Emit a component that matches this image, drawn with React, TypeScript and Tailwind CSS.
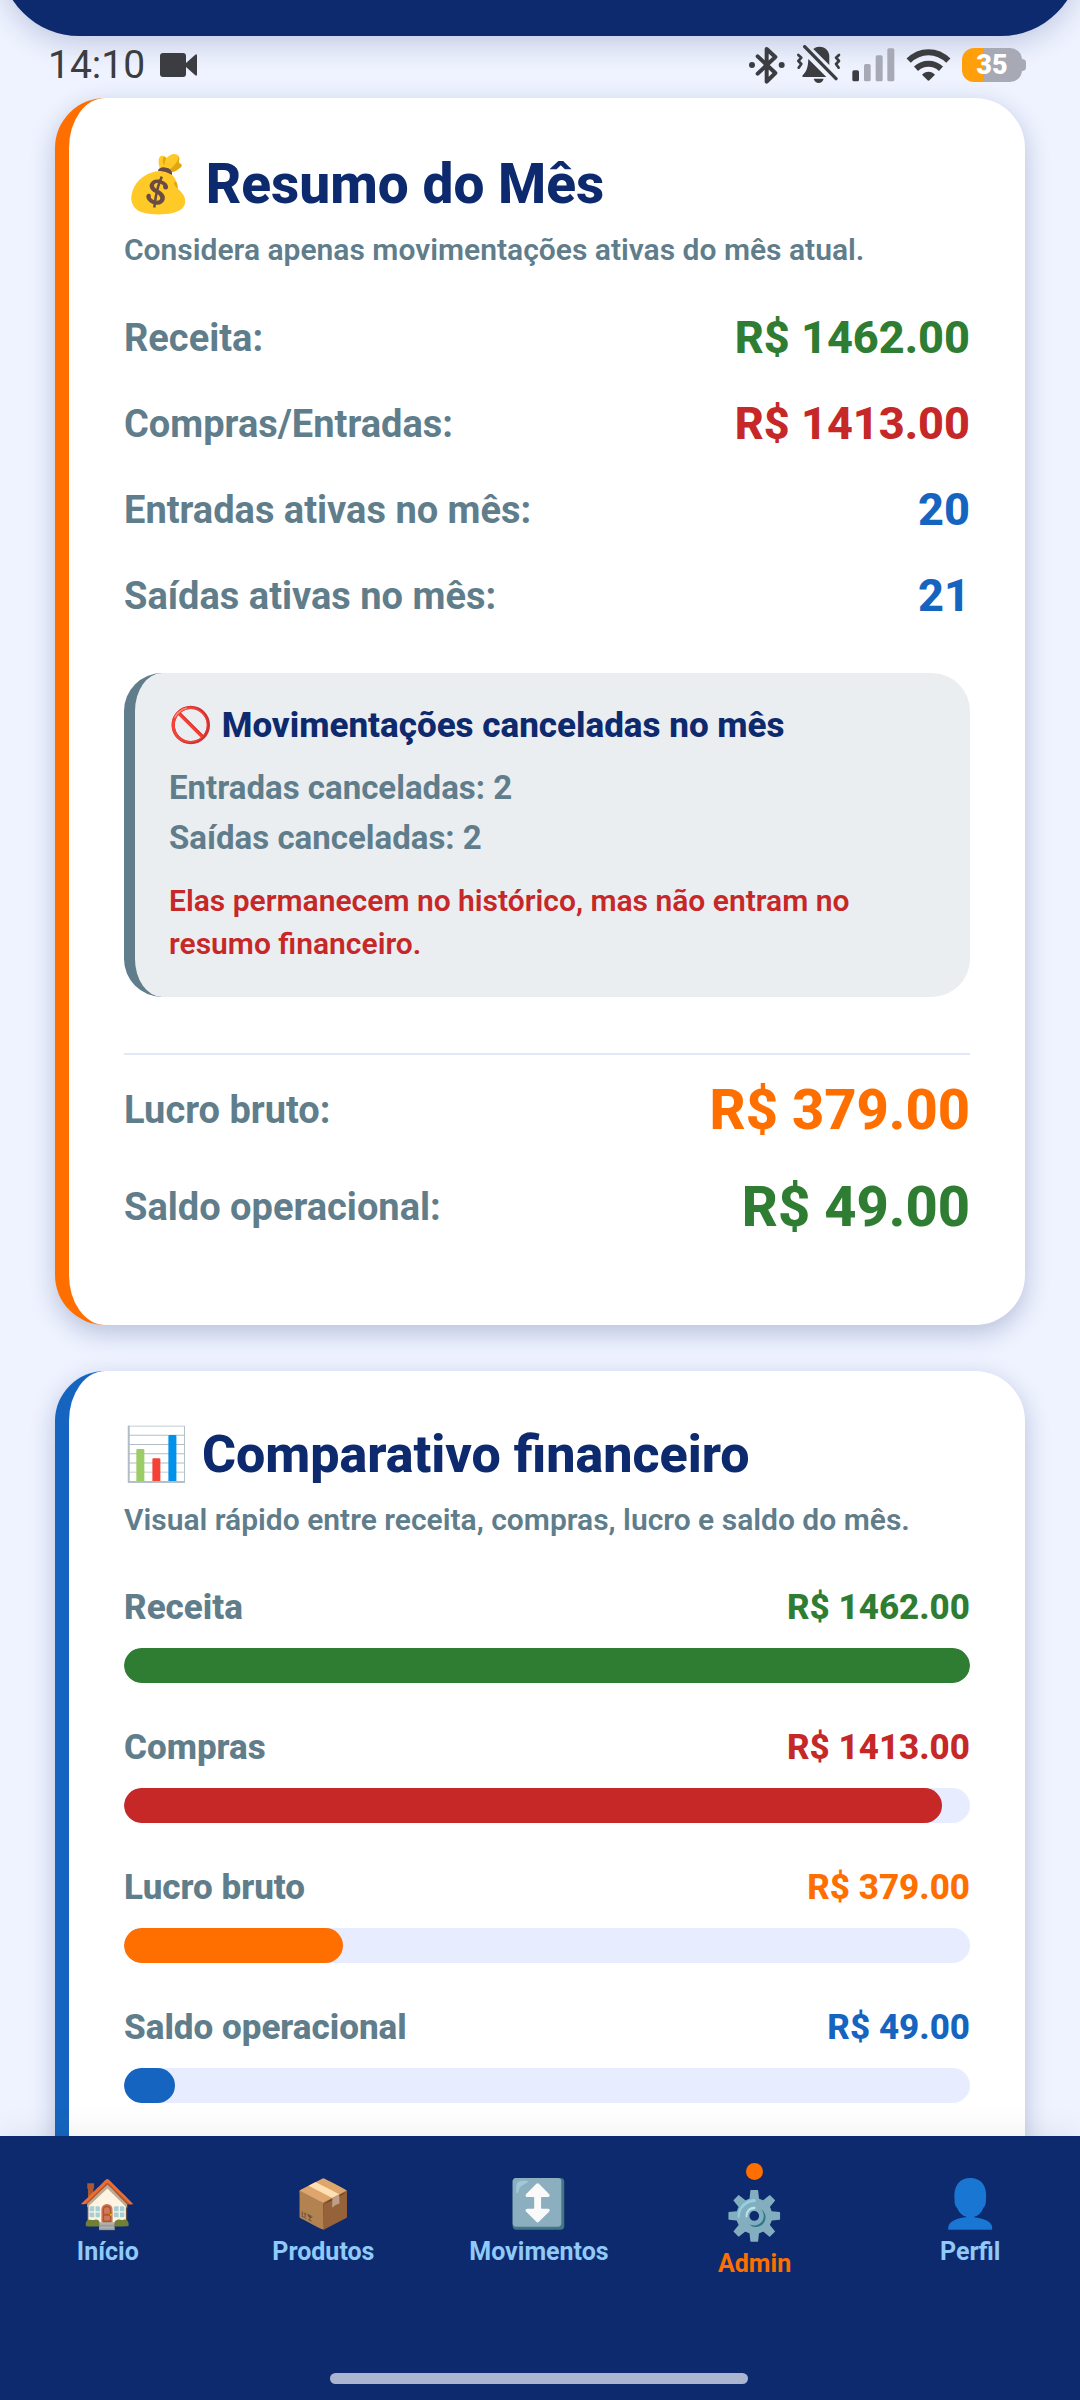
import type { ReactNode } from "react";
import clsx from "clsx";

const summary = [
  { label: "Receita:", value: "R$ 1462.00", color: "text-[#2e7d32]" },
  { label: "Compras/Entradas:", value: "R$ 1413.00", color: "text-[#c62828]" },
  { label: "Entradas ativas no mês:", value: "20", color: "text-[#1565c0]" },
  { label: "Saídas ativas no mês:", value: "21", color: "text-[#1565c0]" },
];

const totals = [
  { label: "Lucro bruto:", value: "R$ 379.00", color: "text-[#ff6f00]" },
  { label: "Saldo operacional:", value: "R$ 49.00", color: "text-[#2e7d32]" },
];

const bars = [
  { label: "Receita", amount: 1462, color: "text-[#2e7d32]", fill: "bg-[#2e7d32]" },
  { label: "Compras", amount: 1413, color: "text-[#c62828]", fill: "bg-[#c62828]" },
  { label: "Lucro bruto", amount: 379, color: "text-[#ff6f00]", fill: "bg-[#ff6f00]" },
  { label: "Saldo operacional", amount: 49, color: "text-[#1565c0]", fill: "bg-[#1565c0]" },
];

const tabs = [
  { icon: "🏠", label: "Início" },
  { icon: "📦", label: "Produtos" },
  { icon: "↕️", label: "Movimentos" },
  { icon: "⚙️", label: "Admin", active: true },
  { icon: "👤", label: "Perfil" },
];

const maxAmount = Math.max(...bars.map((bar) => bar.amount));

// small amounts still get a visible pill
function barWidth(amount: number) {
  return `${Math.max((amount / maxAmount) * 100, 6)}%`;
}

function BluetoothIcon() {
  return (
    <svg width="37" height="40" viewBox="0 0 111 120" aria-hidden="true">
      <path
        d="M29 34 L82 84 L56 110 V12 L82 36 L29 86"
        fill="none"
        stroke="#3c3d40"
        strokeWidth="12"
        strokeLinecap="round"
        strokeLinejoin="round"
      />
      <circle cx="12" cy="60" r="9" fill="#3c3d40" />
      <circle cx="101" cy="60" r="9" fill="#3c3d40" />
    </svg>
  );
}

function MutedBellIcon() {
  return (
    <svg width="45" height="40" viewBox="0 0 135 120" aria-hidden="true">
      <g fill="#3c3d40">
        <path d="M52 12 C58 7 63 5 70 5 C89 5 100 19 100 36 V60 Z" />
        <path d="M37 42 L91 96 H21 C19 96 18 93 20 91 C34 76 36 64 37 42 Z" />
        <path d="M53 101 H83 C80 110 75 114 68 114 C61 114 56 110 53 101 Z" />
      </g>
      <g fill="none" stroke="#3c3d40" strokeLinecap="round" strokeLinejoin="round">
        <path d="M26 5 L120 101" strokeWidth="10" />
        <path d="M7 30 L16 38 L7 48 L16 57 L8 68" strokeWidth="8" />
        <path d="M129 30 L120 38 L129 48 L120 57 L128 68" strokeWidth="8" />
      </g>
    </svg>
  );
}

function SignalIcon() {
  return (
    <svg width="43" height="34" viewBox="0 0 129 102" aria-hidden="true">
      <rect x="1" y="67" width="20" height="33" rx="5" fill="#3c3d40" />
      <rect x="36" y="48" width="20" height="52" rx="5" fill="#a7a9b4" />
      <rect x="71" y="22" width="21" height="78" rx="5" fill="#a7a9b4" />
      <rect x="106" y="1" width="21" height="99" rx="5" fill="#a7a9b4" />
    </svg>
  );
}

function WifiIcon() {
  return (
    <svg width="45" height="34" viewBox="0 0 135 102" aria-hidden="true">
      <g fill="none" stroke="#3c3d40" strokeWidth="18">
        <path d="M8 38 C42 4 93 4 127 38" />
        <path d="M30 62 C52 42 83 42 105 62" />
      </g>
      <path d="M48 80 C58 68 77 68 87 80 L71 96 C69 99 66 99 64 96 Z" fill="#3c3d40" />
    </svg>
  );
}

function Battery() {
  return (
    <div className="flex items-center">
      <div className="flex h-[34px] w-[60px] items-center justify-center rounded-[12px] bg-linear-to-r from-[#ff9f0a] from-35% to-[#a7a9b4] to-35% text-[27px] leading-none font-black text-white">
        35
      </div>
      <div className="h-3 w-1 rounded-r-full bg-[#a7a9b4]" />
    </div>
  );
}

function StatusBar() {
  return (
    <div className="flex items-center justify-between pt-1.5 pr-[54px] pb-2.5 pl-12 text-[#3c3d40]">
      <div className="flex items-center gap-[15px]">
        <span className="text-[39px] leading-[46px]">14:10</span>
        <svg width="37" height="24" viewBox="0 0 37 24" fill="#3c3d40" aria-hidden="true">
          <rect width="26" height="24" rx="3" />
          <path d="M26 10 L35 2 C36 1 37 1 37 3 V21 C37 23 36 23 35 22 L26 14 Z" />
        </svg>
      </div>
      <div className="flex items-center gap-[11px]">
        <BluetoothIcon />
        <MutedBellIcon />
        <SignalIcon />
        <WifiIcon />
        <Battery />
      </div>
    </div>
  );
}

function Card({ className, children }: { className: string; children: ReactNode }) {
  return (
    <section
      className={clsx(
        "rounded-[50px] border-l-[14px] bg-white px-[55px] pt-[54px] pb-[85px] shadow-[0_8px_24px_rgba(14,42,110,0.25)]",
        className
      )}
    >
      {children}
    </section>
  );
}

export default function App() {
  return (
    <div className="flex h-screen flex-col overflow-hidden bg-[#eff3ff] font-['Roboto',sans-serif] text-[#607d8b]">
      <header className="-mt-[84px] h-[120px] shrink-0 rounded-b-[79px] bg-[#0e2a6e] shadow-[0_8px_28px_rgba(14,42,110,0.2)]" />
      <StatusBar />

      <main className="flex min-h-0 flex-1 flex-col gap-[46px] px-[55px] *:shrink-0">
        <Card className="border-[#ff6f00]">
          <h2 className="text-[55px] leading-[64px] font-extrabold text-[#0e2a6e]">💰 Resumo do Mês</h2>
          <p className="mt-3.5 text-[30px] leading-[40px] font-semibold">
            Considera apenas movimentações ativas do mês atual.
          </p>

          <dl className="mt-[42px] flex flex-col gap-[34px]">
            {summary.map((row) => (
              <div key={row.label} className="flex items-center justify-between">
                <dt className="text-[38px] leading-[52px] font-bold">{row.label}</dt>
                <dd className={clsx("text-[45px] leading-[52px] font-extrabold", row.color)}>{row.value}</dd>
              </div>
            ))}
          </dl>

          <div className="mt-[51px] rounded-[38px] border-l-[11px] border-[#607d8b] bg-[#ebeef1] px-[34px] py-8">
            <h3 className="text-[35px] leading-[42px] font-extrabold text-[#0e2a6e]">
              🚫 Movimentações canceladas no mês
            </h3>
            <p className="mt-4 text-[33px] leading-[50px] font-bold">Entradas canceladas: 2</p>
            <p className="text-[33px] leading-[50px] font-bold">Saídas canceladas: 2</p>
            <p className="mt-4 text-[30px] leading-[43px] font-semibold text-[#c62828]">
              Elas permanecem no histórico, mas não entram no resumo financeiro.
            </p>
          </div>

          <dl className="mt-14 flex flex-col gap-[31px] border-t-2 border-[#e3e8f5] pt-[22px]">
            {totals.map((row) => (
              <div key={row.label} className="flex items-center justify-between">
                <dt className="text-[38px] leading-[66px] font-bold">{row.label}</dt>
                <dd className={clsx("text-[56px] leading-[66px] font-extrabold", row.color)}>{row.value}</dd>
              </div>
            ))}
          </dl>
        </Card>

        <Card className="border-[#1565c0]">
          <h2 className="text-[52px] leading-[60px] font-extrabold text-[#0e2a6e]">📊 Comparativo financeiro</h2>
          <p className="mt-[15px] text-[30px] leading-[40px] font-semibold">
            Visual rápido entre receita, compras, lucro e saldo do mês.
          </p>

          <ul className="mt-[47px] flex flex-col gap-11">
            {bars.map((bar) => (
              <li key={bar.label}>
                <div className="flex justify-between text-[35px] leading-[42px] font-extrabold">
                  <span>{bar.label}</span>
                  <span className={bar.color}>R$ {bar.amount.toFixed(2)}</span>
                </div>
                <div className="mt-[19px] h-[35px] overflow-hidden rounded-full bg-[#e8ecff]">
                  <div className={clsx("h-full rounded-full", bar.fill)} style={{ width: barWidth(bar.amount) }} />
                </div>
              </li>
            ))}
          </ul>
        </Card>
      </main>

      <nav className="relative shrink-0 bg-[#0e2a6e] pt-[27px] pr-0.5 pb-4 shadow-[0_-6px_28px_rgba(0,0,0,0.06)]">
        <ul className="flex h-[116px] items-center">
          {tabs.map((tab) => (
            <li key={tab.label} className="flex-1">
              <a
                href="#"
                aria-current={tab.active ? "page" : undefined}
                className={clsx("flex flex-col items-center", tab.active ? "text-[#ff6f00]" : "text-[#90caf9]")}
              >
                {tab.active && <span className="mb-2 size-[17px] rounded-full bg-[#ff6f00]" />}
                <span className="text-[47px] leading-[56px]">{tab.icon}</span>
                <span className="mt-[5px] text-[25px] leading-[30px] font-bold">{tab.label}</span>
              </a>
            </li>
          ))}
        </ul>
        <div className="mx-auto mt-[94px] h-[11px] w-[418px] rounded-full bg-[#abb4d0]" />
      </nav>
    </div>
  );
}
